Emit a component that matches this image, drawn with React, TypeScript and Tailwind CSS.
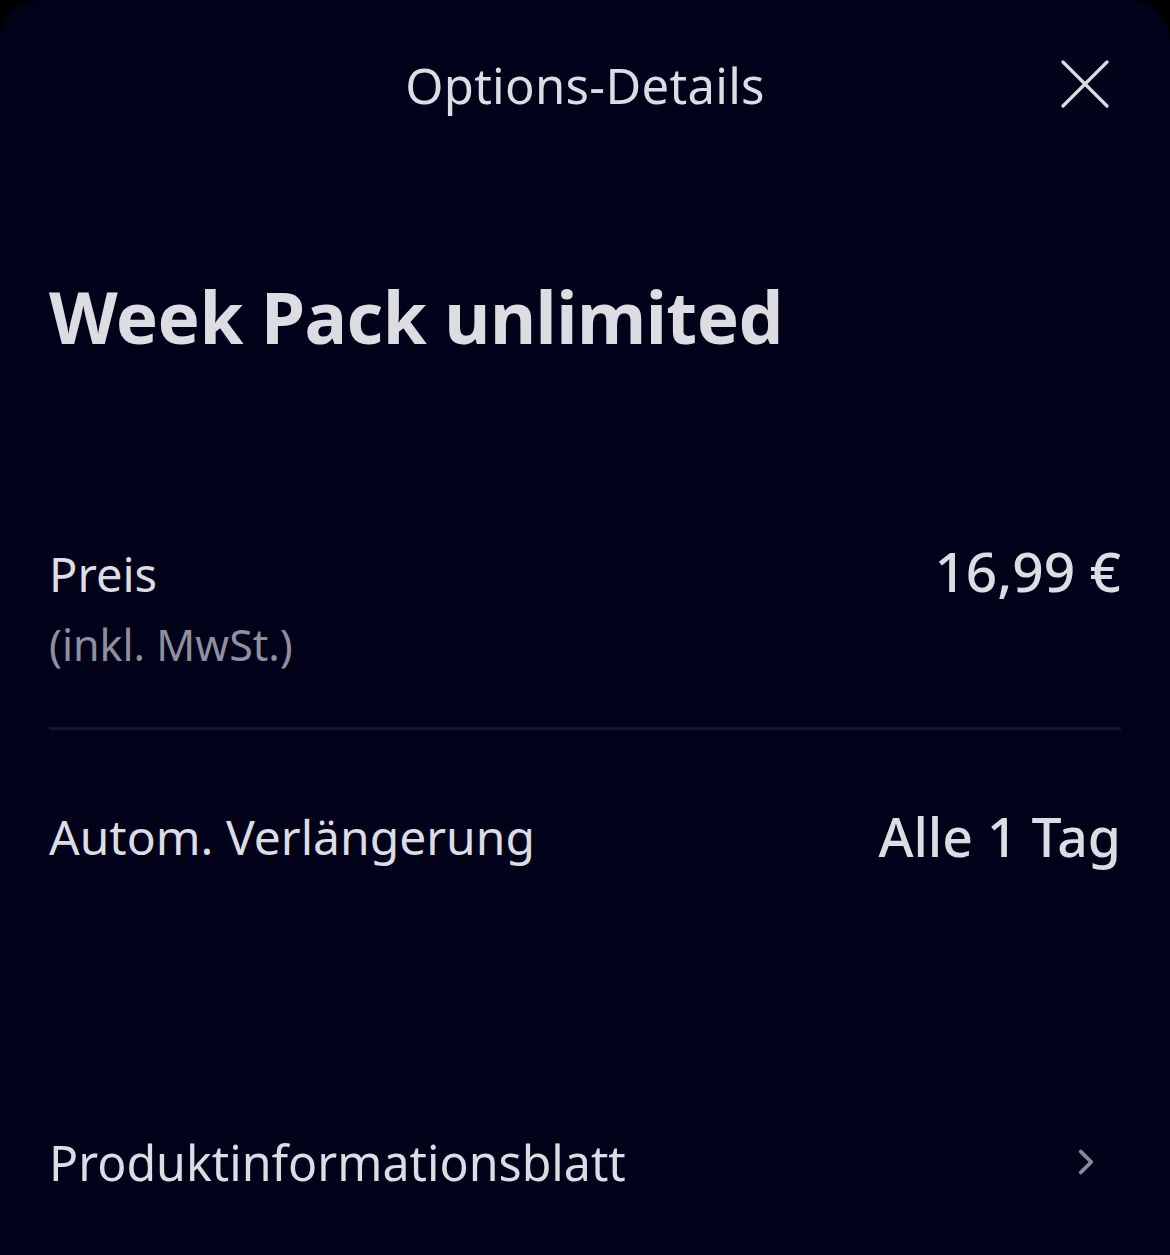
import { ChevronRight } from "lucide-react";

const font = { fontFamily: '"Noto Sans", "Open Sans", sans-serif' };

function CloseIcon() {
  return (
    <svg width="48" height="48" viewBox="0 0 48 48" fill="none">
      <path
        d="M2 2L46 46M46 2L2 46"
        stroke="#dcdce3"
        strokeWidth="3.2"
        strokeLinecap="round"
      />
    </svg>
  );
}

export default function App() {
  return (
    <div className="min-h-[1255px] bg-black" style={font}>
      <div className="min-h-[1255px] rounded-t-[40px] bg-[#02011a] px-[49px] text-[#dcdce3]">
        <header className="grid h-[170px] grid-cols-[1fr_auto_1fr] items-center">
          <div />
          <h1 className="text-[49px] leading-none tracking-[0.3px]">Options-Details</h1>
          <div className="flex justify-end">
            <button className="mr-[12px] mb-[3px]">
              <CloseIcon />
            </button>
          </div>
        </header>

        <h2 className="mt-[111px] text-[71px] font-bold leading-none tracking-[-0.5px]">
          Week Pack unlimited
        </h2>

        <section className="mt-[187px] flex items-start justify-between border-b-[3px] border-[#15142b] pb-[50px]">
          <div>
            <div className="text-[47px] leading-[1.5]">Preis</div>
            <div className="mt-[3px] text-[43px] leading-[1.5] text-[#8f8f9e]">(inkl. MwSt.)</div>
          </div>
          <div className="mt-[4px] text-[55px] font-medium leading-none">16,99 €</div>
        </section>

        <section className="mt-[80px] flex items-center justify-between">
          <div className="text-[48px] leading-none">Autom. Verlängerung</div>
          <div className="text-[53.5px] font-medium leading-none">Alle 1 Tag</div>
        </section>

        <section className="mt-[274px] flex items-center justify-between">
          <div className="text-[48.3px] leading-none">Produktinformationsblatt</div>
          <ChevronRight className="mr-[14px] h-[42px] w-[42px] text-[#8a8a98]" strokeWidth={2.2} />
        </section>
      </div>
    </div>
  );
}
